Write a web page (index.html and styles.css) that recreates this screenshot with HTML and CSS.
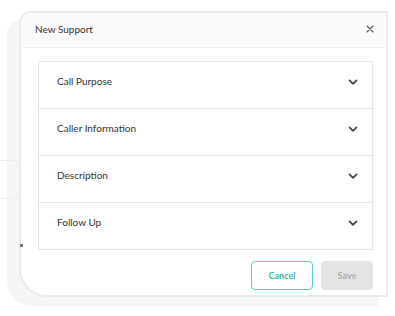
FILE: index.html
```html
<!DOCTYPE html>
<html>
<head>
<meta charset="utf-8">
<link rel="stylesheet" href="styles.css">
</head>
<body>
<div class="page">
  <div class="page-rows">
    <div class="page-row r1"></div>
    <div class="page-row r2"></div>
  </div>
  <div class="backdrop"></div>
  <div class="marker"></div>
  <div class="modal">
    <div class="modal-header">
      <span class="modal-title">New Support</span>
      <svg class="close" width="8" height="8" viewBox="0 0 8 8"><path d="M1 1L7 7M7 1L1 7" stroke="#555" stroke-width="1.1" stroke-linecap="round"/></svg>
    </div>
    <div class="modal-body">
      <div class="accordion">
        <div class="acc-item"><span class="acc-label">Call Purpose</span><svg class="chev" width="10" height="7" viewBox="0 0 10 7"><path d="M1.5 1.3L5 4.8L8.5 1.3" fill="none" stroke="#444" stroke-width="1.7" stroke-linecap="round" stroke-linejoin="round"/></svg></div>
        <div class="acc-item"><span class="acc-label">Caller Information</span><svg class="chev" width="10" height="7" viewBox="0 0 10 7"><path d="M1.5 1.3L5 4.8L8.5 1.3" fill="none" stroke="#444" stroke-width="1.7" stroke-linecap="round" stroke-linejoin="round"/></svg></div>
        <div class="acc-item"><span class="acc-label">Description</span><svg class="chev" width="10" height="7" viewBox="0 0 10 7"><path d="M1.5 1.3L5 4.8L8.5 1.3" fill="none" stroke="#444" stroke-width="1.7" stroke-linecap="round" stroke-linejoin="round"/></svg></div>
        <div class="acc-item"><span class="acc-label">Follow Up</span><svg class="chev" width="10" height="7" viewBox="0 0 10 7"><path d="M1.5 1.3L5 4.8L8.5 1.3" fill="none" stroke="#444" stroke-width="1.7" stroke-linecap="round" stroke-linejoin="round"/></svg></div>
      </div>
      <div class="modal-footer">
        <button class="btn btn-cancel">Cancel</button>
        <button class="btn btn-save">Save</button>
      </div>
    </div>
  </div>
</div>
</body>
</html>
```
FILE: styles.css
```css
html, body {
  margin: 0;
  padding: 0;
  background: #fff;
}
body {
  font-family: "Lato", "Liberation Sans", sans-serif;
  color: #333;
}
.page {
  position: relative;
  width: 395px;
  height: 316px;
  overflow: hidden;
}
.page-rows {
  position: absolute;
  left: 0;
  top: 0;
  width: 20px;
  display: flex;
  flex-direction: column;
}
.page-row {
  border-bottom: 1px solid #ececec;
}
.page-row.r1 { height: 160px; }
.page-row.r2 { height: 37px; }
.backdrop {
  margin: 20px 0 0 7px;
  width: 371px;
  height: 286px;
  background: #f5f5f5;
  border-radius: 14px 0 0 26px;
}
.marker {
  position: absolute;
  left: 20px;
  top: 244px;
  width: 3px;
  height: 3px;
  background: #777;
  z-index: 2;
}
.modal {
  position: absolute;
  left: 19px;
  top: 11px;
  width: 369px;
  height: 286px;
  box-sizing: border-box;
  background: #fff;
  border: 2px solid #e7ecf0;
  border-radius: 12px 0 0 28px;
  display: flex;
  flex-direction: column;
  overflow: hidden;
}
.modal-header {
  height: 35px;
  box-sizing: border-box;
  background: #fafafa;
  border-bottom: 1px solid #efefef;
  display: flex;
  align-items: center;
  justify-content: space-between;
  padding: 0 12px 0 14px;
}
.modal-title {
  font-size: 10px;
  color: #333;
  margin-top: -2px;
}
.close {
  display: block;
  margin-top: -2px;
}
.modal-body {
  padding: 13px 13px 0 17px;
  display: flex;
  flex-direction: column;
}
.accordion {
  border: 1px solid #e6e6e6;
}
.acc-item {
  height: 46px;
  display: flex;
  justify-content: space-between;
  align-items: flex-start;
  padding: 13px 14px 0 18px;
  box-sizing: border-box;
}
.acc-item + .acc-item {
  height: 47px;
  border-top: 1px solid #e6e6e6;
}
.acc-label {
  font-size: 10px;
  line-height: 13px;
  color: #333;
}
.chev {
  display: block;
  margin-top: 4px;
}
.modal-footer {
  display: flex;
  justify-content: flex-end;
  gap: 8px;
  margin-top: 11px;
}
.btn {
  height: 29px;
  box-sizing: border-box;
  border-radius: 4px;
  font-family: "Lato", "Liberation Sans", sans-serif;
  font-size: 9px;
  font-weight: 700;
  padding: 0;
}
.btn-cancel {
  width: 62px;
  background: #fff;
  border: 1px solid #5ccdbf;
  color: #3eb6a7;
}
.btn-save {
  width: 52px;
  background: #e4e4e4;
  border: 1px solid #e4e4e4;
  color: #adadad;
}
```
